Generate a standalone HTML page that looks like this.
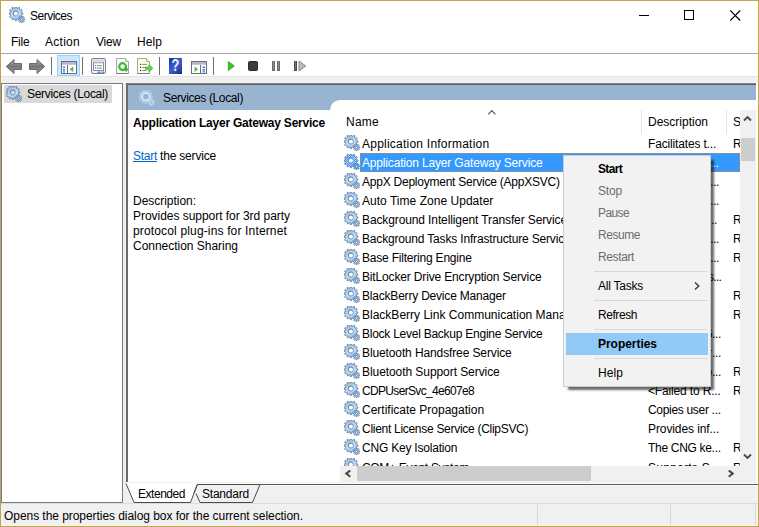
<!DOCTYPE html><html><head><meta charset="utf-8"><title>Services</title><style>

html,body{margin:0;padding:0}
body{width:759px;height:527px;overflow:hidden;position:relative;background:#f0f0f0;font:12px/16px "Liberation Sans", sans-serif;color:#000}
div,span,svg{position:absolute;box-sizing:border-box}
.t{white-space:nowrap;height:16px;line-height:16px;font-size:12px}
.b{font-weight:bold}
.g{color:#6d6d6d}
svg.ic{width:16px;height:16px;overflow:visible}

</style></head><body>
<svg width="0" height="0" style="left:0;top:0"><defs>
<linearGradient id="gg" x1="0.200" y1="0" x2="0.600" y2="1"><stop offset="0" stop-color="#9cb8d8"/><stop offset="0.600" stop-color="#c6e4f8"/><stop offset="1" stop-color="#94bce2"/></linearGradient>
<linearGradient id="gr" x1="0" y1="0" x2="1" y2="1"><stop offset="0" stop-color="#56749c"/><stop offset="1" stop-color="#b8d4ee"/></linearGradient>
<path id="g1" fill-rule="evenodd" clip-rule="evenodd" d="M6.040 1.168L6.278 -0.372L7.522 -0.372L7.760 1.168L8.871 1.465L9.847 0.251L10.925 0.873L10.361 2.326L11.174 3.139L12.627 2.575L13.249 3.653L12.035 4.629L12.332 5.740L13.872 5.978L13.872 7.222L12.332 7.460L12.035 8.571L13.249 9.547L12.627 10.625L11.174 10.061L10.361 10.874L10.925 12.327L9.847 12.949L8.871 11.735L7.760 12.032L7.522 13.572L6.278 13.572L6.040 12.032L4.929 11.735L3.953 12.949L2.875 12.327L3.439 10.874L2.626 10.061L1.173 10.625L0.551 9.547L1.765 8.571L1.468 7.460L-0.072 7.222L-0.072 5.978L1.468 5.740L1.765 4.629L0.551 3.653L1.173 2.575L2.626 3.139L3.439 2.326L2.875 0.873L3.953 0.251L4.929 1.465ZM4.400 6.600a2.500 2.500 0 1 0 5.000 0a2.500 2.500 0 1 0 -5.000 0Z"/>
<path id="g2" fill-rule="evenodd" clip-rule="evenodd" d="M11.953 10.269L12.100 9.024L12.900 9.024L13.047 10.269L13.620 10.506L14.605 9.730L15.170 10.295L14.394 11.280L14.631 11.853L15.876 12.000L15.876 12.800L14.631 12.947L14.394 13.520L15.170 14.505L14.605 15.070L13.620 14.294L13.047 14.531L12.900 15.776L12.100 15.776L11.953 14.531L11.380 14.294L10.395 15.070L9.830 14.505L10.606 13.520L10.369 12.947L9.124 12.800L9.124 12.000L10.369 11.853L10.606 11.280L9.830 10.295L10.395 9.730L11.380 10.506ZM11.500 12.400a1.000 1.000 0 1 0 2.000 0a1.000 1.000 0 1 0 -2.000 0Z"/>
<clipPath id="gclip"><use href="#g1"/><use href="#g2"/></clipPath>
<pattern id="chk" width="2" height="2" patternUnits="userSpaceOnUse"><rect x="0" y="0" width="1" height="1" fill="#3399ff"/><rect x="1" y="1" width="1" height="1" fill="#3399ff"/></pattern>
<symbol id="gear" viewBox="0 0 16 16">
<g fill="url(#gg)" stroke="#5c7da8" stroke-width="0.850"><use href="#g1"/><use href="#g2"/></g>
<circle cx="6.900" cy="6.600" r="2.900" fill="none" stroke="url(#gr)" stroke-width="0.800"/>
</symbol>
<symbol id="gearpale" viewBox="0 0 16 16">
<g fill="#b4cce4" stroke="#c2d6ea" stroke-width="0.500"><use href="#g1"/><use href="#g2"/></g>
<circle cx="6.900" cy="6.600" r="3.700" fill="#99b4d1" stroke="#dcebf8" stroke-width="1.500"/>
<circle cx="12.500" cy="12.400" r="1.700" fill="#99b4d1" stroke="#cfe0f1" stroke-width="0.900"/>
</symbol>
<symbol id="gearsel" viewBox="0 0 16 16">
<use href="#gear"/>
<rect x="0" y="0" width="16" height="16" fill="url(#chk)" clip-path="url(#gclip)"/>
</symbol>
</defs></svg>
<div style="left:0;top:0;width:759px;height:527px;border:1px solid #bda453"></div>
<div style="left:757px;top:54px;width:1px;height:472px;background:#f7f7fb"></div>
<div style="left:1px;top:525px;width:757px;height:1px;background:#f5f5f9"></div>
<div style="left:1px;top:1px;width:757px;height:52px;background:#fff"></div>
<div style="left:1px;top:53px;width:757px;height:1px;background:#a6a6a6"></div>
<div style="left:1px;top:54px;width:757px;height:22px;background:#fff"></div>
<div style="left:1px;top:76px;width:757px;height:1px;background:#e4e4e4"></div>
<svg class="ic" style="left:9px;top:7px"><use href="#gear"/></svg>
<span class="t" style="left:30px;top:8px;letter-spacing:-0.502px;">Services</span>
<div style="left:639px;top:15px;width:10px;height:1px;background:#000"></div>
<div style="left:684px;top:10px;width:10px;height:10px;border:1px solid #000"></div>
<svg style="left:730px;top:10px" width="11" height="11" viewBox="0 0 11 11"><path d="M0.200 0.500L10.200 10.500M10.200 0.500L0.200 10.500" stroke="#000" stroke-width="1.150" fill="none"/></svg>
<span class="t" style="left:11px;top:34px;letter-spacing:-0.211px;">File</span>
<span class="t" style="left:45px;top:34px;letter-spacing:0.273px;">Action</span>
<span class="t" style="left:96px;top:34px;letter-spacing:-0.199px;">View</span>
<span class="t" style="left:137px;top:34px;letter-spacing:0.078px;">Help</span>
<svg width="0" height="0" style="left:0;top:0"><defs>
<linearGradient id="ag" x1="0" y1="0" x2="0" y2="1"><stop offset="0" stop-color="#b0b0b0"/><stop offset="0.500" stop-color="#767676"/><stop offset="1" stop-color="#a0a0a0"/></linearGradient>
<linearGradient id="hg" x1="0" y1="0" x2="1" y2="1"><stop offset="0" stop-color="#1c3fa8"/><stop offset="0.500" stop-color="#4f78e0"/><stop offset="1" stop-color="#1a3390"/></linearGradient>
<linearGradient id="yg" x1="0" y1="0" x2="0" y2="1"><stop offset="0" stop-color="#fffcd0"/><stop offset="1" stop-color="#fffff4"/></linearGradient>
</defs></svg>
<svg style="left:5px;top:58px" width="18" height="17" viewBox="0 0 18 17"><path d="M9 1.500L1.300 8.500L9 15.500V11.500H16.500V5.500H9Z" fill="url(#ag)" stroke="#6b6b6b" stroke-width="1" stroke-linejoin="round"/></svg>
<svg style="left:28px;top:58px" width="18" height="17" viewBox="0 0 18 17"><path d="M9 1.500L16.700 8.500L9 15.500V11.500H1.500V5.500H9Z" fill="url(#ag)" stroke="#6b6b6b" stroke-width="1" stroke-linejoin="round"/></svg>
<div style="left:51px;top:57px;width:1px;height:18px;background:#707070"></div>
<div style="left:57px;top:55px;width:23px;height:21px;background:#cce8ff;border:1px solid #99d1ff"></div>
<svg style="left:61px;top:61px" width="16" height="13" viewBox="0 0 16 13">
<rect x="0.500" y="0.500" width="15" height="12" fill="#fff" stroke="#6e6e78"/>
<rect x="1" y="1" width="14" height="2" fill="#b4b8c6"/>
<rect x="1" y="3" width="14" height="1" fill="#c9ccd6"/>
<rect x="6" y="4" width="1" height="8" fill="#6e6e78"/>
<rect x="2" y="5.500" width="2" height="1.500" fill="#3b78d8"/><rect x="2" y="8" width="2" height="1.500" fill="#3b78d8"/><rect x="2" y="10.300" width="2" height="1.200" fill="#3b78d8"/>
<path d="M12 6L9 8.300L12 10.600Z" fill="#4cc040" stroke="#34a02c" stroke-width=".4"/>
</svg>
<div style="left:82px;top:57px;width:1px;height:18px;background:#707070"></div>
<svg style="left:91px;top:58px" width="15" height="16" viewBox="0 0 15 16">
<rect x="0.500" y="0.500" width="14" height="15" rx="1.500" fill="#f6f6f8" stroke="#6e6e82" stroke-width=".9"/>
<rect x="1.500" y="1.500" width="12" height="2" fill="#d4d6de"/>
<rect x="2.500" y="4.500" width="10" height="8" fill="#fff" stroke="#8a8c98"/>
<rect x="4" y="4" width="3" height="1.500" fill="#b8bac4"/><rect x="8" y="4" width="3" height="1.500" fill="#b8bac4"/>
<rect x="4" y="7" width="1.200" height="1.200" fill="#3b78d8"/><rect x="6" y="7.200" width="5" height="1" fill="#8a8c98"/>
<rect x="4" y="9.500" width="1.200" height="1.200" fill="#3b78d8"/><rect x="6" y="9.700" width="5" height="1" fill="#8a8c98"/>
<rect x="6.500" y="13.500" width="3" height="1.500" fill="#2f8fe8"/><rect x="10.500" y="13.500" width="2.500" height="1.500" fill="#8a8c98"/>
</svg>
<svg style="left:116px;top:58px" width="14" height="16" viewBox="0 0 14 16">
<path d="M0.500 0.500H9.500L12.500 3.500V15.500H0.500Z" fill="#fdfdfd" stroke="#9c9c9c" stroke-width=".9"/><path d="M0.500 15.500H12.500" stroke="#7c7c7c" stroke-width="1"/>
<path d="M9.500 0.500V3.500H12.500" fill="#ececec" stroke="#9c9c9c" stroke-width=".8"/>
<circle cx="6.600" cy="8.600" r="3.400" fill="none" stroke="#3fba32" stroke-width="2.300"/>
<path d="M8.300 9.300L12.600 11L9.900 14.300Z" fill="#35ad2a"/>
<path d="M8.600 4.200L11 6.300" stroke="#fdfdfd" stroke-width="1"/>
</svg>
<svg style="left:137px;top:58px" width="17" height="16" viewBox="0 0 17 16">
<path d="M0.500 0.500H9.500L12.500 3.500V15.500H0.500Z" fill="url(#yg)" stroke="#9c9c9c" stroke-width=".9"/><path d="M0.500 15.500H12.500" stroke="#7c7c7c" stroke-width="1"/>
<path d="M9.500 0.500V3.500H12.500" fill="#f4f0d0" stroke="#9c9c9c" stroke-width=".8"/>
<rect x="3" y="5.800" width="1.100" height="1.100" fill="#222"/><rect x="5.300" y="5.900" width="4.500" height="0.900" fill="#777"/>
<rect x="3" y="8.900" width="1.100" height="1.100" fill="#222"/><rect x="5.300" y="9" width="3.500" height="0.900" fill="#777"/>
<rect x="3" y="12" width="1.100" height="1.100" fill="#222"/><rect x="5.300" y="12.100" width="4" height="0.900" fill="#777"/>
<path d="M8.500 9H11.800V6.600L16 10.300L11.800 14V11.600H8.500Z" fill="#5cd04a" stroke="#38a82e" stroke-width=".5"/>
</svg>
<div style="left:159px;top:57px;width:1px;height:18px;background:#707070"></div>
<div style="left:169px;top:58px;width:13px;height:16px;background:linear-gradient(135deg,#16349a,#3c60cc 50%,#15298a)"></div>
<span style="left:169px;top:57px;width:13px;height:17px;line-height:17px;text-align:center;font-size:16px;font-weight:bold;color:#eef4ff;transform:scaleX(.8)">?</span>
<svg style="left:191px;top:61px" width="16" height="13" viewBox="0 0 16 13">
<rect x="0.500" y="0.500" width="15" height="12" fill="#fff" stroke="#6e6e78"/>
<rect x="1" y="1" width="14" height="2" fill="#b4b8c6"/>
<rect x="1" y="3" width="14" height="1" fill="#c9ccd6"/>
<rect x="9" y="4" width="1" height="8" fill="#6e6e78"/>
<rect x="11.500" y="5.500" width="2.500" height="1.500" fill="#3b78d8"/><rect x="11.500" y="8" width="2.500" height="1.500" fill="#3b78d8"/><rect x="11.500" y="10.300" width="2.500" height="1.200" fill="#3b78d8"/>
<path d="M3.800 6L6.800 8.300L3.800 10.600Z" fill="#4cc040" stroke="#34a02c" stroke-width=".4"/>
</svg>
<div style="left:213px;top:57px;width:1px;height:18px;background:#707070"></div>
<svg style="left:227px;top:60px" width="9" height="12" viewBox="0 0 9 12"><path d="M1.300 1.500L7.300 6L1.300 10.500Z" fill="#40c02c" stroke="#3ab026" stroke-width="1" stroke-linejoin="round"/></svg>
<div style="left:248px;top:61px;width:10px;height:10px;background:#3e3e3e;border:1px solid #2e2e2e;border-radius:1.500px"></div>
<div style="left:272px;top:61px;width:3px;height:10px;background:#8e8e8e;border:1px solid #6a6a6a;border-width:0 1px 1px 1px"></div>
<div style="left:277px;top:61px;width:3px;height:10px;background:#8e8e8e;border:1px solid #6a6a6a;border-width:0 1px 1px 1px"></div>
<div style="left:294px;top:61px;width:3px;height:10px;background:#777;border:1px solid #4a4a4a;border-width:0 1px 1px 1px"></div>
<svg style="left:298px;top:60px" width="9" height="12" viewBox="0 0 9 12"><path d="M1 1L7.800 6L1 11Z" fill="#bcbcbc" stroke="#8c8c8c" stroke-width="1" stroke-linejoin="round"/></svg>
<div style="left:1px;top:83px;width:122px;height:420px;background:#fff;border:1px solid #767a8a"></div>
<div style="left:4px;top:85px;width:108px;height:18px;background:#d9d9d9"></div>
<svg class="ic" style="left:6px;top:86px"><use href="#gear"/></svg>
<span class="t" style="left:27px;top:86px;letter-spacing:-0.314px;">Services (Local)</span>
<div style="left:126px;top:83px;width:630px;height:399px;background:#fff;border-left:2px solid #6b6b6b;border-top:2px solid #6b6b6b"></div>
<div style="left:756px;top:83px;width:2px;height:401px;background:#fff"></div>
<div style="left:128px;top:85px;width:628px;height:25px;background:#99b4d1"></div>
<svg class="ic" style="left:139px;top:90px"><use href="#gearpale"/></svg>
<span class="t" style="left:163px;top:90px;letter-spacing:-0.377px;">Services (Local)</span>
<div style="left:330px;top:100px;width:428px;height:20px;background:#fff;border-top-left-radius:10px"></div>
<span class="t b" style="left:133px;top:115px;letter-spacing:-0.225px;">Application Layer Gateway Service</span>
<span class="t" style="left:133px;top:148px;color:#0066cc;letter-spacing:-0.269px;text-decoration:underline">Start</span>
<span class="t" style="left:160px;top:148px;letter-spacing:-0.185px;">the service</span>
<span class="t" style="left:133px;top:193px;letter-spacing:-0.030px;">Description:</span>
<span class="t" style="left:133px;top:208px;letter-spacing:-0.036px;">Provides support for 3rd party</span>
<span class="t" style="left:133px;top:223px;letter-spacing:0.153px;">protocol plug-ins for Internet</span>
<span class="t" style="left:133px;top:238px;letter-spacing:-0.023px;">Connection Sharing</span>
<span class="t" style="left:346px;top:114px;letter-spacing:0.246px;">Name</span>
<span class="t" style="left:648px;top:114px;letter-spacing:-0.003px;">Description</span>
<span class="t" style="left:733px;top:114px;letter-spacing:-2.016px;">S</span>
<div style="left:641px;top:110px;width:1px;height:24px;background:#e5e5e5"></div>
<div style="left:726px;top:110px;width:1px;height:24px;background:#e5e5e5"></div>
<svg style="left:487px;top:109px" width="10" height="7" viewBox="0 0 10 7"><path d="M1.200 5.400L4.800 1.600L8.400 5.400" stroke="#585858" stroke-width="1.150" fill="none"/></svg>
<svg class="ic" style="left:344px;top:135px"><use href="#gear"/></svg>
<span class="t" style="left:362px;top:136px;letter-spacing:0.231px;">Application Information</span>
<span class="t" style="left:648px;top:136px;letter-spacing:-0.162px;">Facilitates t...</span>
<span class="t" style="left:733px;top:136px;letter-spacing:-0.286px;">R</span>
<div style="left:360px;top:153px;width:380px;height:19px;background:#3399ff;border:1px dotted #d8803c"></div>
<svg class="ic" style="left:344px;top:154px"><use href="#gearsel"/></svg>
<span class="t" style="left:362px;top:155px;color:#fff;letter-spacing:-0.170px;">Application Layer Gateway Service</span>
<span class="t" style="left:648px;top:155px;color:#fff;letter-spacing:-0.091px;">Provides su</span>
<span class="t" style="left:709.7px;top:155px;color:#fff;letter-spacing:-0.472px;">...</span>
<svg class="ic" style="left:344px;top:173px"><use href="#gear"/></svg>
<span class="t" style="left:362px;top:174px;letter-spacing:-0.234px;">AppX Deployment Service (AppXSVC)</span>
<span class="t" style="left:648px;top:174px;letter-spacing:-0.034px;">Provides inf</span>
<span class="t" style="left:710.3px;top:174px;letter-spacing:-0.472px;">...</span>
<svg class="ic" style="left:344px;top:192px"><use href="#gear"/></svg>
<span class="t" style="left:362px;top:193px;letter-spacing:0.030px;">Auto Time Zone Updater</span>
<span class="t" style="left:648px;top:193px;letter-spacing:0.227px;">Automatica</span>
<span class="t" style="left:710.3px;top:193px;letter-spacing:-0.472px;">...</span>
<svg class="ic" style="left:344px;top:211px"><use href="#gear"/></svg>
<span class="t" style="left:362px;top:212px;letter-spacing:-0.114px;">Background Intelligent Transfer Service</span>
<span class="t" style="left:648px;top:212px;letter-spacing:-0.156px;">Transfers fil</span>
<span class="t" style="left:708.2px;top:212px;letter-spacing:-0.472px;">...</span>
<span class="t" style="left:733px;top:212px;letter-spacing:-0.286px;">R</span>
<svg class="ic" style="left:344px;top:230px"><use href="#gear"/></svg>
<span class="t" style="left:362px;top:231px;letter-spacing:-0.172px;">Background Tasks Infrastructure Service</span>
<span class="t" style="left:648px;top:231px;letter-spacing:0.094px;">Windows in</span>
<span class="t" style="left:710.3px;top:231px;letter-spacing:-0.472px;">...</span>
<span class="t" style="left:733px;top:231px;letter-spacing:-0.286px;">R</span>
<svg class="ic" style="left:344px;top:249px"><use href="#gear"/></svg>
<span class="t" style="left:362px;top:250px;letter-spacing:-0.208px;">Base Filtering Engine</span>
<span class="t" style="left:648px;top:250px;letter-spacing:-0.422px;">The Base Fil</span>
<span class="t" style="left:710.3px;top:250px;letter-spacing:-0.472px;">...</span>
<span class="t" style="left:733px;top:250px;letter-spacing:-0.286px;">R</span>
<svg class="ic" style="left:344px;top:268px"><use href="#gear"/></svg>
<span class="t" style="left:362px;top:269px;letter-spacing:-0.154px;">BitLocker Drive Encryption Service</span>
<span class="t" style="left:648px;top:269px;letter-spacing:-0.679px;">BDESVC hos...</span>
<svg class="ic" style="left:344px;top:287px"><use href="#gear"/></svg>
<span class="t" style="left:362px;top:288px;letter-spacing:-0.201px;">BlackBerry Device Manager</span>
<span class="t" style="left:733px;top:288px;letter-spacing:-0.286px;">R</span>
<svg class="ic" style="left:344px;top:306px"><use href="#gear"/></svg>
<span class="t" style="left:362px;top:307px;letter-spacing:0.006px;">BlackBerry Link Communication Manager</span>
<span class="t" style="left:733px;top:307px;letter-spacing:-0.286px;">R</span>
<svg class="ic" style="left:344px;top:325px"><use href="#gear"/></svg>
<span class="t" style="left:362px;top:326px;letter-spacing:-0.251px;">Block Level Backup Engine Service</span>
<span class="t" style="left:648px;top:326px;letter-spacing:-0.573px;">The WBENG</span>
<span class="t" style="left:712.2px;top:326px;letter-spacing:-0.472px;">...</span>
<svg class="ic" style="left:344px;top:344px"><use href="#gear"/></svg>
<span class="t" style="left:362px;top:345px;letter-spacing:-0.114px;">Bluetooth Handsfree Service</span>
<span class="t" style="left:648px;top:345px;letter-spacing:0.197px;">Enables wir</span>
<span class="t" style="left:712.2px;top:345px;letter-spacing:-0.472px;">...</span>
<svg class="ic" style="left:344px;top:363px"><use href="#gear"/></svg>
<span class="t" style="left:362px;top:364px;letter-spacing:-0.069px;">Bluetooth Support Service</span>
<span class="t" style="left:648px;top:364px;letter-spacing:-0.047px;">The Bluetoo</span>
<span class="t" style="left:712.2px;top:364px;letter-spacing:-0.472px;">...</span>
<span class="t" style="left:733px;top:364px;letter-spacing:-0.286px;">R</span>
<svg class="ic" style="left:344px;top:382px"><use href="#gear"/></svg>
<span class="t" style="left:362px;top:383px;letter-spacing:-0.665px;">CDPUserSvc_4e607e8</span>
<span class="t" style="left:648px;top:383px;letter-spacing:-0.156px;">&lt;Failed to R...</span>
<span class="t" style="left:733px;top:383px;letter-spacing:-0.286px;">R</span>
<svg class="ic" style="left:344px;top:401px"><use href="#gear"/></svg>
<span class="t" style="left:362px;top:402px;">Certificate Propagation</span>
<span class="t" style="left:648px;top:402px;letter-spacing:-0.312px;">Copies user ...</span>
<svg class="ic" style="left:344px;top:420px"><use href="#gear"/></svg>
<span class="t" style="left:362px;top:421px;letter-spacing:-0.288px;">Client License Service (ClipSVC)</span>
<span class="t" style="left:648px;top:421px;letter-spacing:-0.094px;">Provides inf...</span>
<svg class="ic" style="left:344px;top:439px"><use href="#gear"/></svg>
<span class="t" style="left:362px;top:440px;letter-spacing:-0.207px;">CNG Key Isolation</span>
<span class="t" style="left:648px;top:440px;letter-spacing:-0.307px;">The CNG ke...</span>
<span class="t" style="left:733px;top:440px;letter-spacing:-0.286px;">R</span>
<svg class="ic" style="left:344px;top:458px"><use href="#gear"/></svg>
<span class="t" style="left:362px;top:460px;letter-spacing:-0.316px;">COM+ Event System</span>
<span class="t" style="left:648px;top:460px;letter-spacing:0.256px;">Supports S...</span>
<span class="t" style="left:733px;top:460px;letter-spacing:-0.286px;">R</span>
<div style="left:340px;top:466px;width:416px;height:16px;background:#f0f0f0"></div>
<div style="left:357px;top:466px;width:234px;height:15px;background:#cdcdcd"></div>
<svg style="left:344px;top:470px" width="8" height="8" viewBox="0 0 8 8"><path d="M6.300 0.400L2.200 3.600L6.300 6.800" stroke="#484848" stroke-width="2" fill="none"/></svg>
<svg style="left:727px;top:470px" width="8" height="8" viewBox="0 0 8 8"><path d="M1.700 0.400L5.800 3.600L1.700 6.800" stroke="#484848" stroke-width="2" fill="none"/></svg>
<div style="left:740px;top:110px;width:16px;height:356px;background:#f0f0f0"></div>
<div style="left:741px;top:138px;width:14px;height:23px;background:#cdcdcd"></div>
<svg style="left:743px;top:115px" width="9" height="8" viewBox="0 0 9 8"><path d="M1 5.500L4.500 2L8 5.500" stroke="#484848" stroke-width="1.900" fill="none"/></svg>
<svg style="left:743px;top:452px" width="9" height="8" viewBox="0 0 9 8"><path d="M1 2.500L4.500 6L8 2.500" stroke="#484848" stroke-width="1.900" fill="none"/></svg>
<div style="left:126px;top:483px;width:632px;height:1px;background:#fff"></div>
<div style="left:128px;top:83px;width:628px;height:1px;background:#868686"></div>
<div style="left:128px;top:84px;width:628px;height:1px;background:#585858"></div>
<div style="left:260px;top:485px;width:498px;height:1px;background:#fafafa"></div>
<svg style="left:120px;top:482px" width="160" height="22" viewBox="0 0 160 22">
<path d="M6 1L14 20.500H70.500L77 2.500V1Z" fill="#fff" stroke="none"/>
<path d="M6 1.500L14 20.500H70.500L77.300 2.500" fill="none" stroke="#4a4a4a" stroke-width="1"/>
<path d="M74 11L77.300 2.500M77.300 2.500H140L132.500 20.500H80L76 11.500" fill="none" stroke="#4a4a4a" stroke-width="1"/>
</svg>
<div style="left:259px;top:484px;width:499px;height:1px;background:#5a5a5a"></div>
<span class="t" style="left:138px;top:486px;letter-spacing:-0.465px;">Extended</span>
<span class="t" style="left:202px;top:486px;letter-spacing:-0.213px;">Standard</span>
<div style="left:1px;top:503px;width:757px;height:1px;background:#dcdcdc"></div>
<span class="t" style="left:4px;top:507.5px;letter-spacing:-0.055px;">Opens the properties dialog box for the current selection.</span>
<div style="left:537px;top:505px;width:1px;height:20px;background:#d7d7d7"></div>
<div style="left:670px;top:505px;width:1px;height:20px;background:#d7d7d7"></div>
<div style="left:755px;top:505px;width:1px;height:20px;background:#d7d7d7"></div>
<div style="left:563px;top:155px;width:148px;height:232px;background:#f2f2f2;border:1px solid #cccccc;box-shadow:4px 4px 2px -1px rgba(0,0,0,.58)"></div>
<span class="t b" style="left:598px;top:161px;letter-spacing:-0.669px;">Start</span>
<span class="t g" style="left:598px;top:183px;letter-spacing:-0.172px;">Stop</span>
<span class="t g" style="left:598px;top:205px;letter-spacing:-0.606px;">Pause</span>
<span class="t g" style="left:598px;top:227px;letter-spacing:-0.448px;">Resume</span>
<span class="t g" style="left:598px;top:249px;letter-spacing:-0.384px;">Restart</span>
<div style="left:594px;top:271px;width:113px;height:1px;background:#d7d7d7"></div>
<span class="t" style="left:598px;top:278px;letter-spacing:-0.238px;">All Tasks</span>
<svg style="left:694px;top:282px" width="6" height="9" viewBox="0 0 6 9"><path d="M1 0.500L4.800 4L1 7.500" stroke="#333" stroke-width="1.300" fill="none"/></svg>
<div style="left:594px;top:300px;width:113px;height:1px;background:#d7d7d7"></div>
<span class="t" style="left:598px;top:307px;letter-spacing:-0.433px;">Refresh</span>
<div style="left:594px;top:329px;width:113px;height:1px;background:#d7d7d7"></div>
<div style="left:566px;top:333px;width:142px;height:22px;background:#91c9f7"></div>
<span class="t b" style="left:598px;top:336px;letter-spacing:-0.036px;">Properties</span>
<div style="left:594px;top:358px;width:113px;height:1px;background:#d7d7d7"></div>
<span class="t" style="left:598px;top:365px;letter-spacing:0.078px;">Help</span>
</body></html>
